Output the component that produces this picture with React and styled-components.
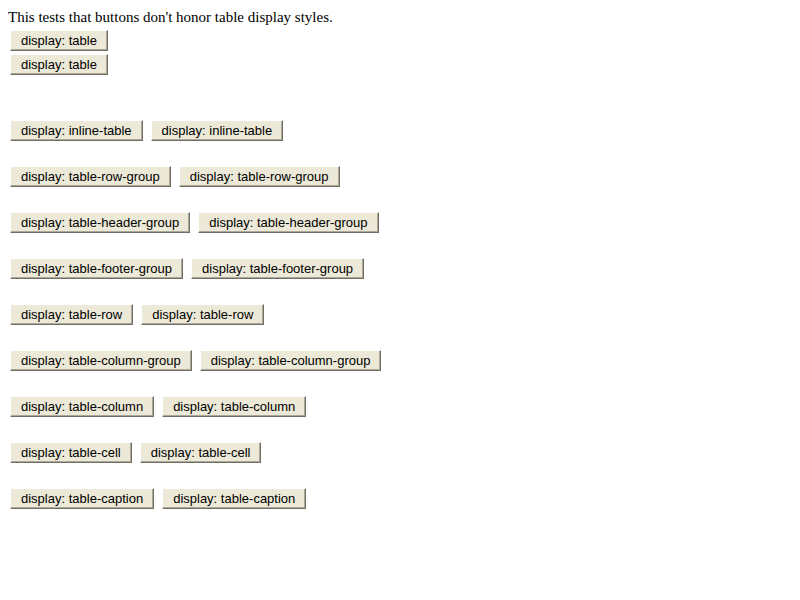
import React from 'react';
import styled, { createGlobalStyle } from 'styled-components';

const GlobalStyle = createGlobalStyle`
	body {
		margin: 8px;
		background: #fff;
		font-family: "Liberation Serif", "Times New Roman", serif;
		font-size: 15px;
		color: #000;
	}
`;

const displays = [
	'inline-table',
	'table-row-group',
	'table-header-group',
	'table-footer-group',
	'table-row',
	'table-column-group',
	'table-column',
	'table-cell',
	'table-caption',
];

export default function App() {
	return (
		<Page>
			<GlobalStyle />
			<Intro>This tests that buttons don't honor table display styles.</Intro>
			<Stack>
				<Button>display: table</Button>
				<Button>display: table</Button>
			</Stack>
			<Rows>
				{displays.map((d) => (
					<Row key={d}>
						<Button>display: {d}</Button>
						<Button>display: {d}</Button>
					</Row>
				))}
			</Rows>
		</Page>
	);
}

const Page = styled.div`
	display: flex;
	flex-direction: column;
	align-items: flex-start;
`;

const Intro = styled.div`
	line-height: 20px;
	height: 20px;
	margin-top: -1px;
	margin-bottom: 3px;
`;

const Stack = styled.div`
	display: flex;
	flex-direction: column;
	align-items: flex-start;
	gap: 3px;
	padding-left: 2px;
`;

const Rows = styled.div`
	display: flex;
	flex-direction: column;
	gap: 25px;
	margin-top: 45px;
	padding-left: 2px;
`;

const Row = styled.div`
	display: flex;
	gap: 8px;
`;

const Button = styled.button`
	box-sizing: border-box;
	height: 21px;
	margin: 0;
	padding: 0 10px 0 10px;
	font-family: "Liberation Sans", Arial, sans-serif;
	font-size: 13px;
	line-height: 15px;
	color: #000;
	background: #ece9d8;
	border-style: solid;
	border-width: 1px;
	border-color: #fff #716f64 #716f64 #fff;
	box-shadow: inset -1px -1px 0 #aca899;
	white-space: nowrap;
	cursor: default;
`;
